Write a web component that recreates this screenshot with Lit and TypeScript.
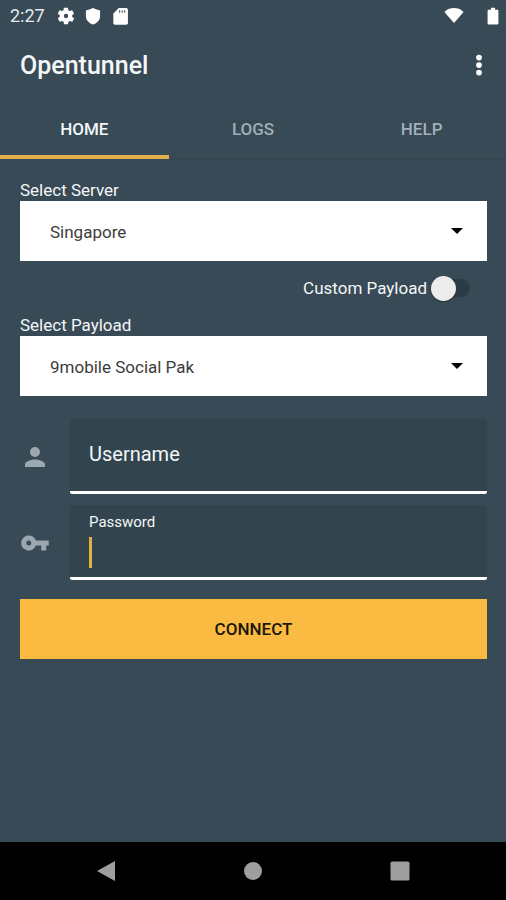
import { LitElement, html, svg, css } from "lit";
import { customElement, state } from "lit/decorators.js";
import { classMap } from "lit/directives/class-map.js";

const icon = (cls: string, d: string, box = "0 0 24 24") =>
  html`<svg class="icon ${cls}" viewBox=${box} aria-hidden="true">${svg`<path fill-rule="evenodd" d=${d}></path>`}</svg>`;

const GEAR =
  "M19.4 13c0-.3.1-.6.1-1s0-.7-.1-1l2.1-1.6c.2-.2.2-.4.1-.6l-2-3.5c-.1-.2-.4-.3-.6-.2l-2.5 1c-.5-.4-1.1-.7-1.7-1l-.4-2.6c0-.3-.2-.5-.5-.5h-4c-.2 0-.4.2-.5.4l-.4 2.7c-.6.2-1.1.6-1.7 1l-2.5-1c-.2-.1-.5 0-.6.2l-2 3.5c-.1.2-.1.5.1.6L4.500 11c0 .3-.1.600-.1 1s0 .7.1 1l-2.100 1.600c-.2.2-.2.4-.1.600l2 3.500c.1.2.4.3.600.2l2.500-1c.5.4 1.100.7 1.700 1l.4 2.600c0 .3.2.5.5.5h4c.2 0 .5-.2.5-.4l.4-2.700c.6-.2 1.100-.6 1.700-1l2.500 1c.2.1.5 0 .6-.2l2-3.500c.1-.2.1-.5-.1-.6zM12 14.600a2.600 2.600 0 1 1 0-5.200a2.600 2.600 0 0 1 0 5.200z";
const SHIELD = "M12 2.500C9 4 6 5 3.500 5.400V12c0 5 3.500 8.500 8.500 10.300c5-1.800 8.500-5.300 8.500-10.300V5.400C18 5 15 4 12 2.500z";
const SD_CARD =
  "M19.500 2.500h-9L4 9v11.500c0 1.100.9 2 2 2h13.500c1.100 0 2-.9 2-2v-16c0-1.100-.9-2-2-2zM11 5h1.200v3H11zM14 5h1.200v3H14zM17 5h1.200v3H17z";
const WIFI = "M12 20.500L.5 7.200C4 3.700 8 2.500 12 2.500s8 1.200 11.500 4.700z";
const BATTERY = "M17.200 4.500H14.500V2.200h-5v2.300H6.800C6 4.500 5.500 5 5.500 5.800v15c0 .7.500 1.300 1.300 1.300h10.400c.8 0 1.300-.6 1.300-1.300v-15c0-.8-.5-1.300-1.300-1.300z";
const MORE = "M12 8.300a2.300 2.300 0 1 0 0-4.600a2.300 2.300 0 0 0 0 4.600zM12 14.300a2.300 2.300 0 1 0 0-4.600a2.300 2.300 0 0 0 0 4.600zM12 20.300a2.300 2.300 0 1 0 0-4.600a2.300 2.300 0 0 0 0 4.600z";
const PERSON = "M12 12a4 4 0 1 0 0-8a4 4 0 0 0 0 8zM12 14c-2.670 0-8 1.340-8 4v2h16v-2c0-2.660-5.330-4-8-4z";
const KEY =
  "M12.650 10A6 6 0 1 0 12.650 14H17v4h4v-4h2v-4zM7 14a2 2 0 1 1 0-4a2 2 0 0 1 0 4z";

@customElement("app-root")
export class AppRoot extends LitElement {
  @state() private tab = "HOME";

  static styles = css`
    :host {
      display: flex;
      flex-direction: column;
      min-height: 100vh;
      background: #374a56;
      color: #f4f6f7;
      font-family: Roboto, "Liberation Sans", sans-serif;
      font-size: 17px;
      line-height: 20px;
    }
    * {
      box-sizing: border-box;
    }
    button,
    input,
    select {
      font: inherit;
      color: inherit;
      margin: 0;
      padding: 0;
      border: 0;
      border-radius: 0;
      background: none;
      outline: none;
    }
    .icon {
      display: block;
      fill: currentColor;
      width: 20px;
      height: 20px;
    }
    .status {
      display: flex;
      align-items: center;
      height: 32px;
      padding: 0 3px 0 10px;
      gap: 7px;
      color: #fff;
    }
    .clock {
      width: 39px;
      font-size: 18px;
      color: #e6eaec;
    }
    .spacer {
      flex: 1;
    }
    .battery {
      margin-left: 12px;
    }
    .toolbar {
      display: flex;
      align-items: center;
      justify-content: space-between;
      height: 66px;
      padding: 0 12px 0 20px;
    }
    h1 {
      margin: 0;
      padding-top: 2px;
      font-size: 25px;
      line-height: 32px;
      font-weight: 500;
    }
    .more {
      width: 30px;
      height: 32px;
    }
    .more .icon {
      width: 30px;
      height: 32px;
      color: #fff;
    }
    .tabs {
      display: grid;
      grid-template-columns: repeat(3, 1fr);
      border-bottom: 1px solid #334650;
    }
    .tab {
      height: 61px;
      padding-top: 4px;
      border-bottom: 4px solid transparent;
      font-weight: 500;
      color: #a3afb9;
    }
    .tab.active {
      color: #f4f6f7;
      border-bottom-color: #dfb04c;
    }
    main {
      flex: 1;
      display: flex;
      flex-direction: column;
      padding: 20px 19px 20px 20px;
    }
    .picker {
      display: flex;
      flex-direction: column;
      line-height: 21px;
    }
    .select {
      display: grid;
      align-items: center;
      background: #fff;
      color: #3c3c3c;
    }
    .select select {
      grid-area: 1 / 1;
      appearance: none;
      width: 100%;
      height: 60px;
      padding: 2px 60px 0 30px;
    }
    .arrow {
      grid-area: 1 / 1;
      justify-self: end;
      margin-right: 24px;
      width: 12px;
      height: 6px;
      color: #000;
      pointer-events: none;
    }
    .switch-row {
      display: flex;
      align-items: center;
      justify-content: flex-end;
      gap: 4px;
      height: 54px;
      padding-right: 17px;
    }
    .switch {
      appearance: none;
      display: grid;
      align-items: center;
      width: 39px;
      height: 26px;
    }
    .switch::before,
    .switch::after {
      content: "";
      grid-area: 1 / 1;
    }
    .switch::before {
      height: 18px;
      margin-left: 4px;
      border-radius: 9px;
      background: #2b3b46;
    }
    .switch::after {
      width: 25px;
      height: 25px;
      border-radius: 50%;
      background: #ececec;
      box-shadow: 0 1px 2px rgba(0, 0, 0, 0.3);
    }
    .switch:checked::after {
      justify-self: end;
    }
    .credentials {
      display: grid;
      grid-template-columns: 30px 1fr;
      align-items: center;
      column-gap: 20px;
      row-gap: 11px;
      margin: 23px 0 19px;
    }
    .credentials > .icon {
      width: 30px;
      height: 30px;
      color: #9ba8b0;
    }
    .field {
      position: relative;
      display: flex;
      align-items: flex-end;
      height: 75px;
      padding: 0 19px 9px;
      background: #32454f;
      border-bottom: 3px solid #fff;
      border-radius: 4px 4px 2px 2px;
    }
    .field label {
      position: absolute;
      left: 19px;
      top: 23px;
      font-size: 20px;
      line-height: 24px;
    }
    .field.floating label {
      top: 7px;
      font-size: 15px;
      line-height: 20px;
    }
    .field input {
      flex: 1;
      min-width: 0;
      height: 32px;
      font-size: 20px;
      caret-color: #e4ae46;
    }
    .caret {
      width: 3px;
      height: 31px;
      background: #e4ae46;
    }
    .connect {
      height: 60px;
      background: #fbbb42;
      color: #1c1708;
      font-weight: 500;
    }
    .nav {
      display: flex;
      justify-content: center;
      height: 58px;
      background: #000;
      color: #9e9e9e;
    }
    .nav button {
      width: 29%;
      display: grid;
      place-items: center;
    }
  `;

  private picker(id: string, label: string, options: string[]) {
    return html`<div class="picker">
      <label for=${id}>${label}</label>
      <div class="select">
        <select id=${id}>
          ${options.map((o) => html`<option>${o}</option>`)}
        </select>
        ${icon("arrow", "M0 0h12L6 6z", "0 0 12 6")}
      </div>
    </div>`;
  }

  render() {
    return html`
      <div class="status">
        <span class="clock">2:27</span>
        ${icon("", GEAR)}${icon("", SHIELD)}${icon("", SD_CARD)}
        <span class="spacer"></span>
        ${icon("", WIFI)}${icon("battery", BATTERY)}
      </div>
      <header class="toolbar">
        <h1>Opentunnel</h1>
        <button class="more" aria-label="More options">${icon("", MORE)}</button>
      </header>
      <nav class="tabs">
        ${["HOME", "LOGS", "HELP"].map(
          (t) => html`<button
            class=${classMap({ tab: true, active: this.tab === t })}
            @click=${() => (this.tab = t)}
          >${t}</button>`
        )}
      </nav>
      <main>
        ${this.picker("server", "Select Server", ["Singapore"])}
        <div class="switch-row">
          <label for="custom">Custom Payload</label>
          <input id="custom" class="switch" type="checkbox" role="switch" />
        </div>
        ${this.picker("payload", "Select Payload", ["9mobile Social Pak"])}
        <div class="credentials">
          ${icon("", PERSON)}
          <div class="field">
            <label for="user">Username</label>
            <input id="user" type="text" />
          </div>
          ${icon("", KEY)}
          <div class="field floating">
            <label for="pass">Password</label>
            <span class="caret"></span>
            <input id="pass" type="password" />
          </div>
        </div>
        <button class="connect">CONNECT</button>
      </main>
      <footer class="nav">
        <button aria-label="Back">${icon("", "M0 10L18 0v20z", "-1 0 20 20")}</button>
        <button aria-label="Home">${icon("", "M10 1a9 9 0 1 0 0 18a9 9 0 0 0 0-18z", "0 0 20 20")}</button>
        <button aria-label="Recent apps">${icon("", "M2 0h16a1.500 1.500 0 0 1 1.500 1.500v16a1.500 1.500 0 0 1-1.500 1.500h-16a1.500 1.500 0 0 1-1.500-1.500v-16a1.500 1.500 0 0 1 1.500-1.500z", "0 0 20 19")}</button>
      </footer>
    `;
  }
}
